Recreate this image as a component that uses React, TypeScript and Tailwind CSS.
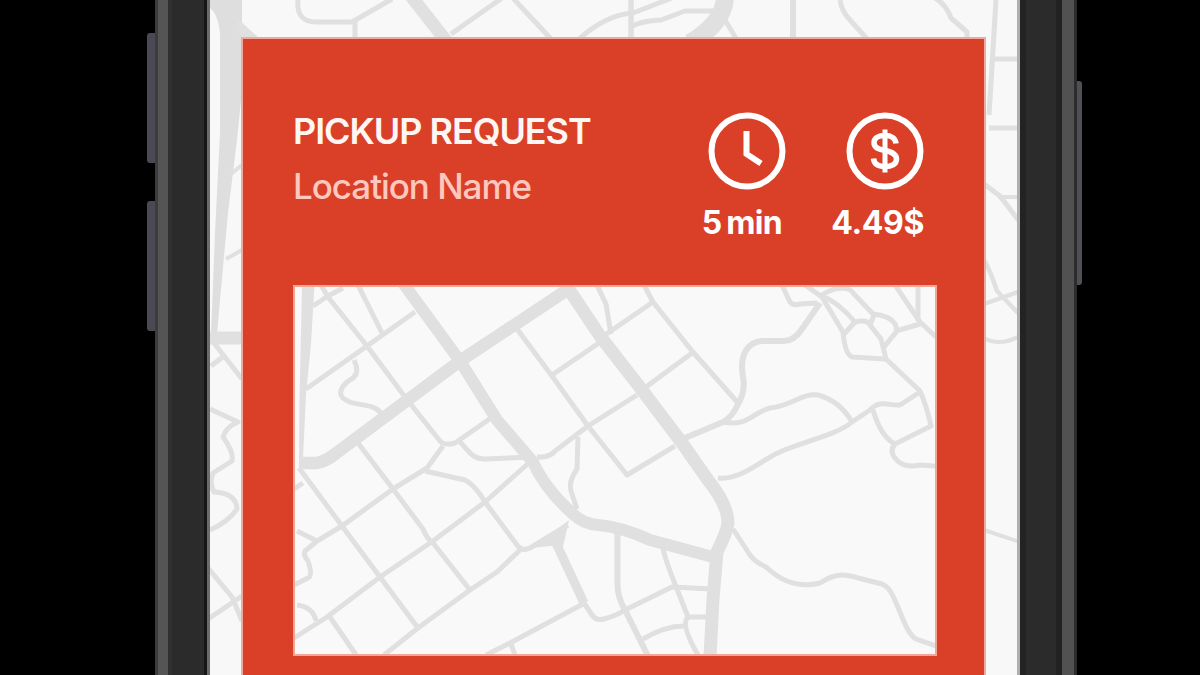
import type { ReactNode } from "react";

type Road = { d: string; w?: number };

const cityRoads: Road[] = [
  // avenues
  { d: "M299 464 H316 Q325 463 335 455 L460 362 L567 291", w: 12.5 },
  { d: "M403 284 L460 362 L497 421 L533 463 Q545 490 573 515 Q583 525 598 526 Q622 528 650 541 L713 558", w: 12 },
  { d: "M566 286 L600 337 L642 391 L682 444 L708 481 Q728 506 728 524 Q727 533 717 553 L713 600 L710 658", w: 13 },
  { d: "M556 544 L584 604", w: 9 },
  // west blocks
  { d: "M321 286 L328 298 L367 347 L405 398 L440 442 Q444 447 455 444 L491 419" },
  { d: "M313 307 L328 297 L343 289" },
  { d: "M358 286 L382 334" },
  { d: "M306 390 L367 347 L415 313" },
  { d: "M354 361 Q360 373 353 379 C341 386 336 396 346 401 C356 408 372 403 381 414" },
  { d: "M358 444 L393 490 L423 530 Q427 540 433 544 L470 591" },
  { d: "M299 469 L342 527 L380 578 L418 629" },
  { d: "M297 532 L317 542 L342 527 L393 490 L427 469 L443 447" },
  { d: "M317 542 L305 552 Q303 556 308 562 Q313 577 308 579 L294 586" },
  { d: "M294 490 L303 484" },
  { d: "M297 606 Q313 608 316 622" },
  { d: "M425 472 L465 481 Q475 486 485 503 L517 546 Q522 553 530 549 L568 526" },
  { d: "M294 639 L327 618 L380 578 L433 542 L485 503 L531 462" },
  { d: "M384 656 L418 629 L470 591 L497 573 L520 551" },
  { d: "M330 618 L356 656" },
  { d: "M486 656 L510 644 L583 605" },
  { d: "M511 645 L515 656" },
  { d: "M460 443 C470 453 472 460 485 460 L530 458" },
  { d: "M537 458 Q549 459 555 452 L588 427 L637 396" },
  { d: "M578 438 L577 470 Q568 483 571 492 L577 510" },
  // centre blocks
  { d: "M517 330 L552 377 L588 427 L627 476 L675 447" },
  { d: "M552 376 L599 344" },
  { d: "M597 286 L606 305 L611 335" },
  { d: "M605 336 L653 303" },
  { d: "M644 286 L653 303 L692 352 L738 404" },
  { d: "M646 388 L692 354" },
  { d: "M584 604 L592 616 Q596 622 604 620 Q618 616 625 611 L672 588 L712 590" },
  { d: "M617.500 533 V583 Q617 597 625 611 L648 657", w: 6 },
  { d: "M663 550 Q666 563 677 590 L688 618 H712" },
  { d: "M688 618 Q680 625 698 656" },
  { d: "M643 640 Q665 627 684 627" },
  // hills on the east side
  { d: "M685 439 L723 423 Q733 417 737 407 Q746 393 743 378 C739 355 748 343 762 342 H784 Q794 342 802 330 L820 304", w: 6 },
  { d: "M723 423 C748 428 751 414 770 409 C790 408 801 394 818 396 Q840 402 852 423" },
  { d: "M718 479 C738 481 756 466 772 457 C790 445 835 438 852 423 L870 411 C880 400 889 407 900 406 L920 393" },
  { d: "M733 530 L750 556 Q755 563 766 568 C785 586 804 588 820 584 C840 571 850 577 862 580 L882 585 Q889 588 893 597 C902 616 907 635 916 640 L936 647" },
  { d: "M782 286 L790 303 Q793 307 800 305 L817 304" },
  { d: "M805 286 L822 298 L843 333 Q845 355 852 358 L885 360" },
  { d: "M822 297 Q838 303 855 323 Q867 320 870 326 L881 340 L886 360 L920 392 Q927 408 931 427 L895 445 Q889 452 895 459 Q903 470 920 466 L936 467" },
  { d: "M873 411 Q881 438 895 445" },
  { d: "M844 335 L855 323" },
  { d: "M822 296 C835 287 850 288 853 294 L873 315 C895 317 902 330 892 338 L884 348" },
  { d: "M870 326 L874 316" },
  { d: "M895 286 L920 323 L936 338" },
  { d: "M918 286 L918 322" },
  { d: "M896 332 L920 325" },
];

const outerRoads: Road[] = [
  { d: "M242 165 L231 174", w: 4 },
  { d: "M242 250 L226 259", w: 4 },
  { d: "M210 338 H242", w: 13 },
  { d: "M214 343 L242 379" },
  { d: "M211 366 L224 356" },
  { d: "M210 409 L238 422 Q226 427 223 437 Q234 452 232 461 L213 473 Q209 483 214 492 Q236 493 237 509 Q228 522 210 530" },
  { d: "M208 568 L232 597 L242 621 M208 619 L242 596" },
  { d: "M236 24 L256 42", w: 10 },
  { d: "M298 0 Q296 22 316 22 H352 L392 -1" },
  { d: "M355 22 V40" },
  { d: "M411 -4 L447 42", w: 13 },
  { d: "M451 34 L502 -2" },
  { d: "M511 -4 L552 40" },
  { d: "M578 40 Q605 15 633 13 L672 -2" },
  { d: "M631 0 V40", w: 5.5 },
  { d: "M631 27 Q640 21 661 20 L685 11 H716", w: 5 },
  { d: "M725 -4 Q725 22 690 43", w: 18 },
  { d: "M725 20 L737 40", w: 5 },
  { d: "M793 0 V40", w: 6 },
  { d: "M840 0 Q842 12 850 20 L868 40", w: 5 },
  { d: "M935 -2 Q946 4 951 18 L967 32 V40", w: 5 },
  { d: "M996 0 L989 115", w: 5 },
  { d: "M993 59 H1020 M989 128 H1020" },
  { d: "M984 184 L1000 196 L1019 221", w: 5 },
  { d: "M998 197 H1020", w: 4 },
  { d: "M984 260 Q990 270 997 291 L1018 313 M984 304 L1018 292", w: 4.5 },
  { d: "M984 338 Q1000 347 1020 336", w: 4 },
  { d: "M984 530 L1020 542", w: 4 },
];

function Roads(props: { roads: Road[] }) {
  return (
    <g fill="none" stroke="#e0e0e0" strokeLinejoin="round">
      {props.roads.map((road) => (
        <path key={road.d} d={road.d} strokeWidth={road.w ?? 5} />
      ))}
    </g>
  );
}

function BackgroundMap() {
  return (
    <svg
      viewBox="210 0 807 675"
      preserveAspectRatio="none"
      className="absolute inset-0 h-full w-full"
    >
      <path
        d="M214 0 H242 V90 L237 140 L228 213 L220 300 L217 335 H211 L215 233 L220 133 V33 Q218 14 210 8 V0 Z"
        fill="#dedede"
      />
      <Roads roads={outerRoads} />
    </svg>
  );
}

function PickupMap() {
  return (
    <svg viewBox="295 288 640 367" className="block h-full w-full">
      <path
        d="M302 286 H314.500 L311 345 L306 395 L303 460 H299 L299.500 400 Z"
        fill="#e0e0e0"
      />
      <path d="M532 549 L569 521 L563 548 L550 547 Z" fill="#e0e0e0" />
      <Roads roads={cityRoads} />
    </svg>
  );
}

function ClockIcon() {
  return (
    <svg
      viewBox="0 0 78 78"
      className="size-[78px]"
      fill="none"
      stroke="white"
      strokeWidth="6"
    >
      <circle cx="39" cy="39" r="35.500" />
      <path d="M38.500 19 V42 L53 51.500" />
    </svg>
  );
}

function DollarIcon() {
  return (
    <svg
      viewBox="0 0 78 78"
      className="size-[78px]"
      fill="none"
      stroke="white"
      strokeWidth="5.500"
    >
      <circle cx="39" cy="39" r="35.500" strokeWidth="6" />
      <path d="M39 17.500 V60.500" strokeWidth="5" />
      <path d="M50 31.500 C49.500 26 45 23.500 39 23.500 C32.500 23.500 28 26 28 30.500 C28 35.500 32 37 39 38.500 C46.500 40 50.500 42 50.500 47 C50.500 52 46 54.500 39 54.500 C32 54.500 28 51.500 27.500 46.500" />
    </svg>
  );
}

function Stat(props: { icon: ReactNode; label: ReactNode; className: string }) {
  return (
    <div className={props.className}>
      {props.icon}
      <div className="mt-[13px] text-[32px] leading-10 whitespace-nowrap text-white">
        {props.label}
      </div>
    </div>
  );
}

function PickupCard() {
  return (
    <div className="relative mt-[37px] ml-[31px] h-[700px] w-[745px] border-2 border-[#efa99e] bg-[#da4028] px-[50px] pt-[73px]">
      <div className="flex h-[173px] justify-between">
        <div>
          <div className="h-[39px] text-[36px] leading-[39px] font-semibold tracking-[-1.05px] whitespace-nowrap text-[#fff6f4]">
            PICKUP REQUEST
          </div>
          <div className="mt-[14px] text-[35px] leading-[42px] font-medium tracking-[-1.05px] whitespace-nowrap text-[#ffc8bf]">
            Location Name
          </div>
        </div>
        <div className="flex">
          <Stat
            icon={<ClockIcon />}
            label={
              <span className="font-bold tracking-[-0.7px] [word-spacing:-2px]">
                5 min
              </span>
            }
            className="flex w-[84px] flex-col items-end [&>div]:mr-[4px]"
          />
          <Stat
            icon={<DollarIcon />}
            label={<span className="font-bold tracking-[-0.4px]">4.49$</span>}
            className="mr-[10px] ml-[44px] flex w-[94px] flex-col items-end"
          />
        </div>
      </div>
      <div className="h-[371px] w-[644px] border-2 border-[#f3a59a] bg-[#f9f9f9]">
        <PickupMap />
      </div>
    </div>
  );
}

function LeftFrame() {
  return (
    <div className="flex">
      <div className="flex w-[8px] flex-col pt-[33px]">
        <div className="h-[130px] rounded-l-[3px] bg-[#4b4954]" />
        <div className="mt-[38px] h-[130px] rounded-l-[3px] bg-[#4b4954]" />
      </div>
      <div className="w-[3px] bg-[#3c3b3f]" />
      <div className="w-[10px] bg-[#555555]" />
      <div className="w-[4px] bg-[#303030]" />
      <div className="w-[32px] bg-[#2b2b2b]" />
      <div className="w-[3px] bg-[#161616]" />
      <div className="w-[3px] bg-[#6b6b6b]" />
    </div>
  );
}

function RightFrame() {
  return (
    <div className="flex">
      <div className="w-[3px] bg-[#aeb0b0]" />
      <div className="w-[6px] bg-[#232323]" />
      <div className="w-[30px] bg-[#2b2b2b]" />
      <div className="w-[6px] bg-[#222222]" />
      <div className="w-[12px] bg-[#515151]" />
      <div className="w-[3px] bg-[#2c2b2e]" />
      <div className="w-[5px] pt-[81px]">
        <div className="h-[204px] rounded-r-[3px] bg-[#504f54]" />
      </div>
    </div>
  );
}

export default function App() {
  return (
    <div className="flex h-screen w-screen overflow-hidden bg-black pl-[147px] font-['Inter',sans-serif]">
      <LeftFrame />
      <div className="relative w-[807px] shrink-0 overflow-hidden bg-[#f8f8f8]">
        <BackgroundMap />
        <PickupCard />
      </div>
      <RightFrame />
    </div>
  );
}
